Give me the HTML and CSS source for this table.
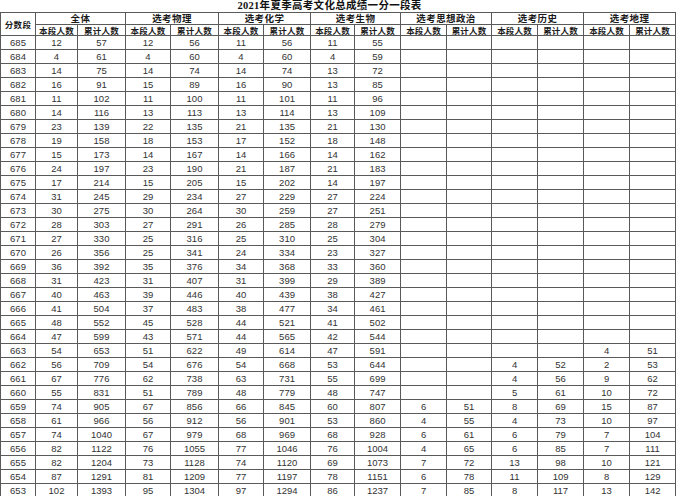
FILE: index.html
```html
<!DOCTYPE html>
<html lang="zh-CN">
<head>
<meta charset="utf-8">
<title>2021年夏季高考文化总成绩一分一段表</title>
<link rel="stylesheet" href="styles.css">
</head>
<body>
<div class="sheet">
  <div class="title">2021年夏季高考文化总成绩一分一段表</div>
  <table class="grid">
    <colgroup>
      <col class="c-score"><col class="w42"><col class="w48"><col class="w45"><col class="w48"><col class="w45"><col class="w47"><col class="w44"><col class="w46"><col class="w46"><col class="w45"><col class="w46"><col class="w46"><col class="w46"><col class="w46">
    </colgroup>
    <thead>
      <tr class="h1">
        <th rowspan="2" class="score-h">分数段</th>
        <th colspan="2">全体</th>
        <th colspan="2">选考物理</th>
        <th colspan="2">选考化学</th>
        <th colspan="2">选考生物</th>
        <th colspan="2">选考思想政治</th>
        <th colspan="2">选考历史</th>
        <th colspan="2">选考地理</th>
      </tr>
      <tr class="h2">
        <th>本段人数</th><th>累计人数</th>
        <th>本段人数</th><th>累计人数</th>
        <th>本段人数</th><th>累计人数</th>
        <th>本段人数</th><th>累计人数</th>
        <th>本段人数</th><th>累计人数</th>
        <th>本段人数</th><th>累计人数</th>
        <th>本段人数</th><th>累计人数</th>
      </tr>
    </thead>
    <tbody>
      <tr><td>685</td><td>12</td><td>57</td><td>12</td><td>56</td><td>11</td><td>56</td><td>11</td><td>55</td><td></td><td></td><td></td><td></td><td></td><td></td></tr>
      <tr><td>684</td><td>4</td><td>61</td><td>4</td><td>60</td><td>4</td><td>60</td><td>4</td><td>59</td><td></td><td></td><td></td><td></td><td></td><td></td></tr>
      <tr><td>683</td><td>14</td><td>75</td><td>14</td><td>74</td><td>14</td><td>74</td><td>13</td><td>72</td><td></td><td></td><td></td><td></td><td></td><td></td></tr>
      <tr><td>682</td><td>16</td><td>91</td><td>15</td><td>89</td><td>16</td><td>90</td><td>13</td><td>85</td><td></td><td></td><td></td><td></td><td></td><td></td></tr>
      <tr><td>681</td><td>11</td><td>102</td><td>11</td><td>100</td><td>11</td><td>101</td><td>11</td><td>96</td><td></td><td></td><td></td><td></td><td></td><td></td></tr>
      <tr><td>680</td><td>14</td><td>116</td><td>13</td><td>113</td><td>13</td><td>114</td><td>13</td><td>109</td><td></td><td></td><td></td><td></td><td></td><td></td></tr>
      <tr><td>679</td><td>23</td><td>139</td><td>22</td><td>135</td><td>21</td><td>135</td><td>21</td><td>130</td><td></td><td></td><td></td><td></td><td></td><td></td></tr>
      <tr><td>678</td><td>19</td><td>158</td><td>18</td><td>153</td><td>17</td><td>152</td><td>18</td><td>148</td><td></td><td></td><td></td><td></td><td></td><td></td></tr>
      <tr><td>677</td><td>15</td><td>173</td><td>14</td><td>167</td><td>14</td><td>166</td><td>14</td><td>162</td><td></td><td></td><td></td><td></td><td></td><td></td></tr>
      <tr><td>676</td><td>24</td><td>197</td><td>23</td><td>190</td><td>21</td><td>187</td><td>21</td><td>183</td><td></td><td></td><td></td><td></td><td></td><td></td></tr>
      <tr><td>675</td><td>17</td><td>214</td><td>15</td><td>205</td><td>15</td><td>202</td><td>14</td><td>197</td><td></td><td></td><td></td><td></td><td></td><td></td></tr>
      <tr><td>674</td><td>31</td><td>245</td><td>29</td><td>234</td><td>27</td><td>229</td><td>27</td><td>224</td><td></td><td></td><td></td><td></td><td></td><td></td></tr>
      <tr><td>673</td><td>30</td><td>275</td><td>30</td><td>264</td><td>30</td><td>259</td><td>27</td><td>251</td><td></td><td></td><td></td><td></td><td></td><td></td></tr>
      <tr><td>672</td><td>28</td><td>303</td><td>27</td><td>291</td><td>26</td><td>285</td><td>28</td><td>279</td><td></td><td></td><td></td><td></td><td></td><td></td></tr>
      <tr><td>671</td><td>27</td><td>330</td><td>25</td><td>316</td><td>25</td><td>310</td><td>25</td><td>304</td><td></td><td></td><td></td><td></td><td></td><td></td></tr>
      <tr><td>670</td><td>26</td><td>356</td><td>25</td><td>341</td><td>24</td><td>334</td><td>23</td><td>327</td><td></td><td></td><td></td><td></td><td></td><td></td></tr>
      <tr><td>669</td><td>36</td><td>392</td><td>35</td><td>376</td><td>34</td><td>368</td><td>33</td><td>360</td><td></td><td></td><td></td><td></td><td></td><td></td></tr>
      <tr><td>668</td><td>31</td><td>423</td><td>31</td><td>407</td><td>31</td><td>399</td><td>29</td><td>389</td><td></td><td></td><td></td><td></td><td></td><td></td></tr>
      <tr><td>667</td><td>40</td><td>463</td><td>39</td><td>446</td><td>40</td><td>439</td><td>38</td><td>427</td><td></td><td></td><td></td><td></td><td></td><td></td></tr>
      <tr><td>666</td><td>41</td><td>504</td><td>37</td><td>483</td><td>38</td><td>477</td><td>34</td><td>461</td><td></td><td></td><td></td><td></td><td></td><td></td></tr>
      <tr><td>665</td><td>48</td><td>552</td><td>45</td><td>528</td><td>44</td><td>521</td><td>41</td><td>502</td><td></td><td></td><td></td><td></td><td></td><td></td></tr>
      <tr><td>664</td><td>47</td><td>599</td><td>43</td><td>571</td><td>44</td><td>565</td><td>42</td><td>544</td><td></td><td></td><td></td><td></td><td></td><td></td></tr>
      <tr><td>663</td><td>54</td><td>653</td><td>51</td><td>622</td><td>49</td><td>614</td><td>47</td><td>591</td><td></td><td></td><td></td><td></td><td>4</td><td>51</td></tr>
      <tr><td>662</td><td>56</td><td>709</td><td>54</td><td>676</td><td>54</td><td>668</td><td>53</td><td>644</td><td></td><td></td><td>4</td><td>52</td><td>2</td><td>53</td></tr>
      <tr><td>661</td><td>67</td><td>776</td><td>62</td><td>738</td><td>63</td><td>731</td><td>55</td><td>699</td><td></td><td></td><td>4</td><td>56</td><td>9</td><td>62</td></tr>
      <tr><td>660</td><td>55</td><td>831</td><td>51</td><td>789</td><td>48</td><td>779</td><td>48</td><td>747</td><td></td><td></td><td>5</td><td>61</td><td>10</td><td>72</td></tr>
      <tr><td>659</td><td>74</td><td>905</td><td>67</td><td>856</td><td>66</td><td>845</td><td>60</td><td>807</td><td>6</td><td>51</td><td>8</td><td>69</td><td>15</td><td>87</td></tr>
      <tr><td>658</td><td>61</td><td>966</td><td>56</td><td>912</td><td>56</td><td>901</td><td>53</td><td>860</td><td>4</td><td>55</td><td>4</td><td>73</td><td>10</td><td>97</td></tr>
      <tr><td>657</td><td>74</td><td>1040</td><td>67</td><td>979</td><td>68</td><td>969</td><td>68</td><td>928</td><td>6</td><td>61</td><td>6</td><td>79</td><td>7</td><td>104</td></tr>
      <tr><td>656</td><td>82</td><td>1122</td><td>76</td><td>1055</td><td>77</td><td>1046</td><td>76</td><td>1004</td><td>4</td><td>65</td><td>6</td><td>85</td><td>7</td><td>111</td></tr>
      <tr><td>655</td><td>82</td><td>1204</td><td>73</td><td>1128</td><td>74</td><td>1120</td><td>69</td><td>1073</td><td>7</td><td>72</td><td>13</td><td>98</td><td>10</td><td>121</td></tr>
      <tr><td>654</td><td>87</td><td>1291</td><td>81</td><td>1209</td><td>77</td><td>1197</td><td>78</td><td>1151</td><td>6</td><td>78</td><td>11</td><td>109</td><td>8</td><td>129</td></tr>
      <tr><td>653</td><td>102</td><td>1393</td><td>95</td><td>1304</td><td>97</td><td>1294</td><td>86</td><td>1237</td><td>7</td><td>85</td><td>8</td><td>117</td><td>13</td><td>142</td></tr>
    </tbody>
  </table>
</div>
</body>
</html>
```

FILE: styles.css
```css
html, body {
  margin: 0;
  padding: 0;
  background: #ffffff;
}

.sheet {
  width: 677px;
  color: #2b2b2b;
  font-family: "Liberation Sans", Arial, "Noto Sans CJK SC", sans-serif;
}

.title {
  height: 12px;
  line-height: 12px;
  font-family: "Liberation Serif", "Noto Sans CJK SC", serif;
  font-size: 10.5px;
  font-weight: bold;
  color: #111;
  text-align: center;
  padding-right: 18px;
  letter-spacing: 0.3px;
  overflow: hidden;
}

.grid {
  border-collapse: collapse;
  table-layout: fixed;
  width: 676px;
}

.c-score { width: 35px; }
.w42 { width: 42px; }
.w44 { width: 44px; }
.w45 { width: 45px; }
.w46 { width: 46px; }
.w47 { width: 47px; }
.w48 { width: 48px; }

.grid th,
.grid td {
  border: 1px solid #5a5a5a;
  padding: 0;
  text-align: center;
  overflow: hidden;
  white-space: nowrap;
}

.grid th {
  font-family: "Noto Sans CJK SC", sans-serif;
  font-weight: bold;
  color: #1a1a1a;
}

.h1 th {
  height: 11px;
  line-height: 11px;
  font-size: 9.5px;
  letter-spacing: 0.4px;
}

.h2 th {
  height: 10px;
  line-height: 10px;
  font-size: 8.5px;
  letter-spacing: 0.2px;
}

.h1 th.score-h {
  font-size: 8.5px;
  letter-spacing: 0.3px;
}

.grid td {
  height: 13px;
  line-height: 13px;
  font-size: 9.5px;
  color: #333;
}
```
